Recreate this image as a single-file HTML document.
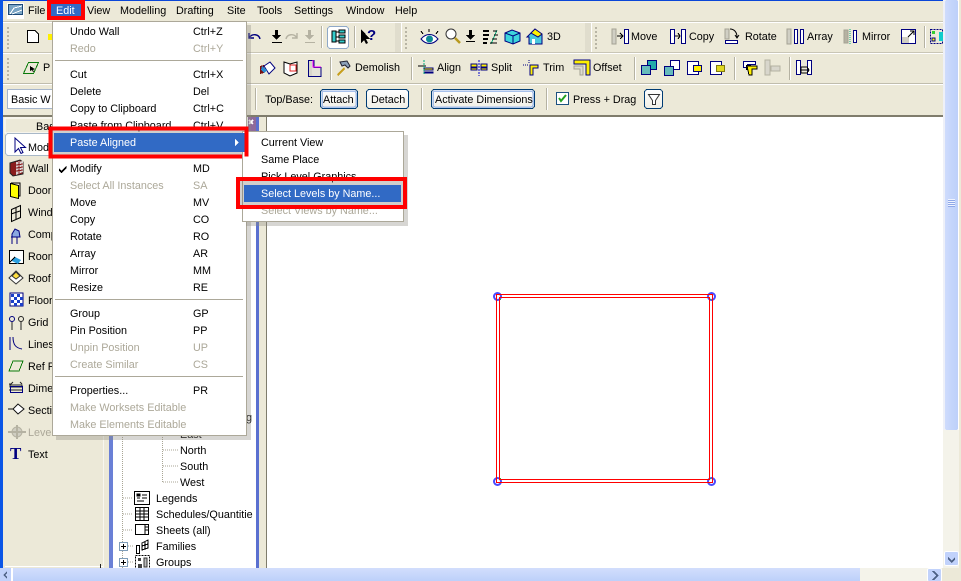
<!DOCTYPE html>
<html><head><meta charset="utf-8"><style>
html,body{margin:0;padding:0;background:#fff;width:961px;height:581px;overflow:hidden}
svg{display:block;position:absolute;left:0;top:0}
text{font-family:"Liberation Sans",sans-serif;font-size:10.8px;fill:#000}
.g{fill:#aca899}
.w{fill:#fff}
.n{fill:none;stroke:#00007f}
</style></head><body>
<svg width="961" height="581" viewBox="0 0 961 581" shape-rendering="crispEdges">
<defs>
<linearGradient id="tb" x1="0" x2="0" y1="0" y2="1"><stop offset="0" stop-color="#fff"/><stop offset="1" stop-color="#f0efe6"/></linearGradient>
<linearGradient id="sv" x1="0" x2="1" y1="0" y2="0"><stop offset="0" stop-color="#cfdcfc"/><stop offset=".5" stop-color="#c4d5fb"/><stop offset="1" stop-color="#bdd0fa"/></linearGradient>
<linearGradient id="sh" x1="0" x2="0" y1="0" y2="1"><stop offset="0" stop-color="#d2defc"/><stop offset="1" stop-color="#bdd0fa"/></linearGradient>
</defs>
<!-- base -->
<rect width="961" height="581" fill="#fff"/>
<rect x="0" y="0" width="943" height="117" fill="#ece9d8"/>
<rect x="0" y="0" width="943" height="1" fill="#0a46d8"/>
<rect x="0" y="0" width="3" height="581" fill="#0a55e6"/>
<rect x="3" y="117" width="106" height="452" fill="#ece9d8"/>
<!-- toolbar rules -->
<rect x="3" y="21" width="940" height="1" fill="#c9c6b6"/><rect x="3" y="22" width="940" height="1" fill="#fff"/>
<rect x="3" y="52" width="940" height="1" fill="#c9c6b6"/><rect x="3" y="53" width="940" height="1" fill="#fff"/>
<rect x="3" y="83" width="940" height="1" fill="#c0bdad"/><rect x="3" y="84" width="940" height="1" fill="#fff"/>
<rect x="3" y="115" width="940" height="2" fill="#7f7c6c"/>
<!-- toolbar band differences -->
<rect x="395" y="23" width="6" height="29" fill="#e0ddcd"/><rect x="585" y="23" width="6" height="29" fill="#e0ddcd"/>
<rect x="401" y="23" width="1" height="29" fill="#fff"/><rect x="591" y="23" width="1" height="29" fill="#fff"/>
<!-- grips -->
<g fill="#b8b5a5">
<rect x="7" y="27" width="2" height="2"/><rect x="7" y="31" width="2" height="2"/><rect x="7" y="35" width="2" height="2"/><rect x="7" y="39" width="2" height="2"/><rect x="7" y="43" width="2" height="2"/><rect x="7" y="47" width="2" height="2"/>
<rect x="7" y="58" width="2" height="2"/><rect x="7" y="62" width="2" height="2"/><rect x="7" y="66" width="2" height="2"/><rect x="7" y="70" width="2" height="2"/><rect x="7" y="74" width="2" height="2"/><rect x="7" y="78" width="2" height="2"/>
<rect x="405" y="27" width="2" height="2"/><rect x="405" y="31" width="2" height="2"/><rect x="405" y="35" width="2" height="2"/><rect x="405" y="39" width="2" height="2"/><rect x="405" y="43" width="2" height="2"/><rect x="405" y="47" width="2" height="2"/>
<rect x="595" y="27" width="2" height="2"/><rect x="595" y="31" width="2" height="2"/><rect x="595" y="35" width="2" height="2"/><rect x="595" y="39" width="2" height="2"/><rect x="595" y="43" width="2" height="2"/><rect x="595" y="47" width="2" height="2"/>
</g>
<!-- vertical separators -->
<g fill="#b5b2a2">
<rect x="321" y="26" width="1" height="22"/><rect x="354" y="26" width="1" height="22"/><rect x="924" y="26" width="1" height="22"/>
<rect x="330" y="57" width="1" height="23"/><rect x="411" y="57" width="1" height="23"/><rect x="634" y="57" width="1" height="23"/><rect x="734" y="57" width="1" height="23"/><rect x="789" y="57" width="1" height="23"/>
<rect x="255" y="88" width="1" height="22"/><rect x="421" y="88" width="1" height="22"/><rect x="546" y="88" width="1" height="22"/>
</g>
<g fill="#fff">
<rect x="322" y="26" width="1" height="22"/><rect x="355" y="26" width="1" height="22"/><rect x="925" y="26" width="1" height="22"/>
<rect x="331" y="57" width="1" height="23"/><rect x="412" y="57" width="1" height="23"/><rect x="635" y="57" width="1" height="23"/><rect x="735" y="57" width="1" height="23"/><rect x="790" y="57" width="1" height="23"/>
<rect x="256" y="88" width="1" height="22"/><rect x="422" y="88" width="1" height="22"/><rect x="547" y="88" width="1" height="22"/>
</g>
<!-- menu bar -->
<text x="28" y="14">File</text><text x="87" y="14">View</text><text x="120" y="14">Modelling</text><text x="176" y="14">Drafting</text><text x="227" y="14">Site</text><text x="257" y="14">Tools</text><text x="294" y="14">Settings</text><text x="346" y="14">Window</text><text x="395" y="14">Help</text>
<!-- app icon -->
<rect x="7" y="3" width="17" height="16" fill="#fff"/><rect x="8.500" y="4.500" width="14" height="10" fill="#7aa4c4" stroke="#1d4a78"/><path d="M10 14L14 8L22 6M12 14L22 10" stroke="#fff" fill="none"/>
<!-- row 1 icons -->
<path d="M27.5 30.5H35L38.5 34V42.5H27.5Z" fill="#fff" stroke="#000"/>
<path d="M48 34h4v6h-4z" fill="#fff000"/>
<path d="M249 33v5h5M249 38c3-5 10-4 11 1" class="n" fill="none" shape-rendering="auto" stroke-width="1.4"/>
<path d="M275 30h3v5h3l-4.500 5-4.500-5h3zM272 42h10v1h-10z" fill="#000"/>
<path d="M297 33v5h-5M297 38c-3-5-10-4-11 1" fill="none" stroke="#b5b2a2" stroke-width="1.4" shape-rendering="auto"/>
<path d="M308 30h3v5h3l-4.500 5-4.500-5h3zM305 42h10v1h-10z" fill="#b5b2a2"/>
<!-- active button -->
<rect x="327.500" y="26.500" width="21" height="22" rx="3" fill="#fff" stroke="#8fa9c8"/>
<path d="M332 31h4v11h-4zM339 30h6v3h-6zM339 35h6v3h-6zM339 40h6v3h-6zM336 32h3M336 37h3M336 41h3" fill="#3cc" stroke="#000"/>
<!-- help -->
<path d="M361 29v14l3-3 2 4 2-1-2-4h4z" fill="#000"/>
<text x="367" y="40" style="font-size:15px;font-weight:bold;fill:#00007f">?</text>
<!-- eye etc -->
<path d="M421 39c5-6 12-6 17 0c-5 6-12 6-17 0z" fill="#fff" stroke="#00007f" shape-rendering="auto"/><circle cx="429.500" cy="39" r="3.500" fill="#0b8a96" shape-rendering="auto"/>
<path d="M429 32v-3M423 34l-2-3M436 34l2-3" stroke="#000"/>
<circle cx="451" cy="34" r="5" fill="#fff" stroke="#333" shape-rendering="auto"/><path d="M455 38l5 5" stroke="#b89a20" stroke-width="2.500" shape-rendering="auto"/>
<path d="M469 30h3v5h3l-4.500 5-4.500-5h3zM466 41h9v1h-9z" fill="#000"/>
<path d="M483 30h6v2h-6zM483 34h6v2h-6zM483 38h5v2h-5zM483 42h4v2h-4z" fill="#000"/><path d="M497 30l-6 14" stroke="#0a7" /><path d="M493 31h4M494 35h4M492 39h5M490 43h7" stroke="#000"/>
<path d="M505 33l7-3 8 3v8l-7 3-8-3z" fill="#3dd6dc" stroke="#00007f" shape-rendering="auto"/><path d="M505 33l8 3 7-3M513 36v8" stroke="#00007f" fill="none" shape-rendering="auto"/>
<path d="M527 37l8-8 7 6v9h-13v-7z" fill="#4ac8dc" stroke="#00007f" shape-rendering="auto"/><path d="M531 33l4-4 7 5-4 3z" fill="#fff000" stroke="#00007f" shape-rendering="auto"/><rect x="532" y="39" width="3" height="5" fill="#fff"/>
<text x="547" y="40">3D</text>
<!-- move -->
<rect x="612" y="29" width="4" height="15" fill="#d0cfc4" stroke="#a5a294"/><rect x="624.500" y="29.500" width="4" height="14" fill="#fff" stroke="#00007f"/><path d="M617 36h6M620 33l3 3-3 3" fill="none" stroke="#000"/>
<text x="631" y="40">Move</text>
<rect x="670.500" y="29.500" width="4" height="14" fill="#fff" stroke="#00007f"/><rect x="681.500" y="29.500" width="4" height="14" fill="#fff" stroke="#00007f"/><path d="M675 36h5M678 33l2 3-2 3" fill="none" stroke="#000"/>
<text x="689" y="40">Copy</text>
<path d="M725 29h4v10h-4z" fill="#d0cfc4" stroke="#a5a294"/><rect x="725.500" y="40.500" width="12" height="3" fill="#fff" stroke="#00007f"/><path d="M730 29c4 0 7 3 7 8M735 35l2 3 2-3" fill="none" stroke="#000" shape-rendering="auto"/>
<text x="745" y="40">Rotate</text>
<rect x="787" y="29" width="4" height="15" fill="#d0cfc4" stroke="#a5a294"/><rect x="794.500" y="29.500" width="3" height="14" fill="#fff" stroke="#00007f"/><rect x="800.500" y="29.500" width="3" height="14" fill="#fff" stroke="#00007f"/>
<text x="807" y="40">Array</text>
<rect x="844" y="30" width="4" height="13" fill="#b5b2a2" stroke="#a5a294"/><path d="M850 29v15" stroke="#0a7" stroke-dasharray="1 1"/><rect x="853.500" y="30.500" width="3" height="12" fill="#fff" stroke="#00007f"/>
<text x="862" y="40">Mirror</text>
<rect x="901.500" y="29.500" width="14" height="14" fill="#fff" stroke="#00007f"/><rect x="902" y="37" width="7" height="6" fill="#cfcdc2"/><path d="M908 37l6-6M910 31h4v4" fill="none" stroke="#000" shape-rendering="auto"/>
<rect x="930.500" y="29.500" width="12" height="14" fill="none" stroke="#00007f" stroke-dasharray="2 1"/><rect x="932" y="31" width="3" height="3" fill="#3c3"/><rect x="932" y="38" width="3" height="3" fill="#ff0" stroke="#00007f"/><rect x="939" y="32" width="4" height="9" fill="#1cc"/>
<!-- row 2 icons -->
<path d="M23.500 73.500L28.500 62.500H38.500L33.500 73.500Z" fill="none" stroke="#0a7a0a"/><path d="M30 66l5 3-2 1 1 2-1 0-1-2-2 1z" fill="#000"/>
<text x="43" y="71">P</text>
<path d="M260 66l4 -1v8l-4 1z" fill="#7a1010"/><path d="M264 66l6-4 5 6-6 6z" fill="#fff" stroke="#00007f" shape-rendering="auto"/><path d="M262 66l5 4-3 3-3-3z" fill="#2a8bd0"/>
<path d="M284 62l6 2 7-2v11l-7 3-6-3z" fill="#fff" stroke="#000" shape-rendering="auto"/><rect x="290" y="65" width="6" height="6" fill="none" stroke="#e02020"/>
<path d="M308.500 60.500h4v16h-4z" fill="#d8d6cc" stroke="#00007f"/><path d="M312 60.500h2v7h7v9h-9" fill="#e4e2d8" stroke="#00007f"/><path d="M313 60v7h8" fill="none" stroke="#f0f"/>
<path d="M337 74l7-7 1 2-7 7z" fill="#c8a020"/><path d="M340 62l7-1 3 5-2 2-3-3-3 1z" fill="#8ca0b8" stroke="#223" shape-rendering="auto"/>
<text x="355" y="71">Demolish</text>
<path d="M418 66h8" stroke="#000"/><path d="M424 68h9v2h-9zM424 72h9v1h-9z" fill="#fff000" stroke="#00007f"/><path d="M424 60v15" stroke="#0a7" stroke-dasharray="2 1"/>
<text x="437" y="71">Align</text>
<path d="M471 64h6v3h-6zM471 70h6v-2h-6zM481 64h6v3h-6zM481 70h6v-2h-6z" fill="#fff000" stroke="#00007f"/><path d="M479 60v16" stroke="#00c" stroke-dasharray="2 1"/>
<text x="491" y="71">Split</text>
<path d="M523 65h6M529 60v4" stroke="#00007f" stroke-dasharray="1 1"/><path d="M530 65h8v3h-5v7h-3z" fill="#fff000" stroke="#00007f"/>
<text x="543" y="71">Trim</text>
<path d="M574 60h16v15h-4v-11h-12z" fill="#fff000" stroke="#00007f"/><path d="M574 66h9v9h-3v-6h-6z" fill="#dedcd0" stroke="#a5a294"/>
<text x="593" y="71">Offset</text>
<rect x="647.500" y="60.500" width="9" height="9" fill="#2aa" stroke="#00007f"/><rect x="641.500" y="65.500" width="9" height="9" fill="#6bb" stroke="#00007f"/>
<rect x="670.500" y="60.500" width="9" height="9" fill="#fff" stroke="#00007f"/><rect x="664.500" y="66.500" width="9" height="9" fill="#6bb" stroke="#00007f"/>
<rect x="687.500" y="61.500" width="11" height="13" fill="#fff" stroke="#00007f"/><rect x="693.500" y="65.500" width="8" height="6" fill="#fff000" stroke="#00007f"/>
<rect x="710.500" y="61.500" width="11" height="13" fill="#fff" stroke="#00007f"/><rect x="716.500" y="65.500" width="8" height="6" fill="#e0d820" stroke="#807a10"/>
<path d="M743.500 61.500h12v3h-8v3h-4z" fill="#fff" stroke="#00007f"/><rect x="746.500" y="65.500" width="4" height="4" fill="#fff" stroke="#000"/><path d="M747 66h10v3h-5v6h-3z" fill="#fff000" stroke="#000"/>
<path d="M765 60h5v15h-5zM771 66h9v5h-9z" fill="#d8d6cc" stroke="#b5b2a2"/>
<rect x="796.500" y="60.500" width="4" height="14" fill="#fff" stroke="#00007f"/><rect x="807.500" y="60.500" width="4" height="14" fill="#fff" stroke="#00007f"/><path d="M800 70h8M801 67h6l2 3-2 3h-6z" fill="none" stroke="#000"/>
<!-- row 3 -->
<rect x="7.500" y="89.500" width="50" height="19" fill="#fff" stroke="#a5b5cc"/>
<text x="11" y="103">Basic W</text>
<text x="265" y="103">Top/Base:</text>
<g>
<rect x="320.500" y="89.500" width="37" height="19" rx="3" fill="url(#tb)" stroke="#003c74"/><rect x="322" y="91" width="34" height="16" rx="2" fill="none" stroke="#a7c0ea" stroke-width="1.500"/>
<rect x="366.500" y="89.500" width="42" height="19" rx="3" fill="url(#tb)" stroke="#003c74"/>
<rect x="431.500" y="89.500" width="103" height="19" rx="3" fill="url(#tb)" stroke="#003c74"/><rect x="433" y="91" width="100" height="16" rx="2" fill="none" stroke="#a7c0ea" stroke-width="1.500"/>
<rect x="644.500" y="89.500" width="18" height="19" rx="3" fill="url(#tb)" stroke="#003c74"/>
</g>
<text x="323" y="103">Attach</text><text x="371" y="103">Detach</text><text x="435" y="103">Activate Dimensions</text>
<path d="M648.500 94.500h11l-4 6v4h-3v-4z" fill="#fff" stroke="#333" shape-rendering="auto"/>
<rect x="556.500" y="92.500" width="12" height="12" fill="#fff" stroke="#1c5180"/><path d="M559 98l2 3 5-6" fill="none" stroke="#21a121" stroke-width="2" shape-rendering="auto"/>
<text x="573" y="103">Press + Drag</text>
<!-- left panel -->
<rect x="5" y="118" width="60" height="15" fill="#ece9d8" stroke="#fff"/>
<text x="36" y="130">Bas</text>
<rect x="5.500" y="133.500" width="60" height="22" rx="3" fill="#fff" stroke="#a8b8c8"/>
<path d="M15 138v14l3.500-3.500 2.500 5 2-1-2.500-5h5z" fill="#fff" stroke="#00007f" shape-rendering="auto"/>
<text x="28" y="151">Modify</text><text x="28" y="172">Wall</text><text x="28" y="194">Door</text><text x="28" y="216">Window</text><text x="28" y="238">Component</text><text x="28" y="260">Room</text><text x="28" y="282">Roof</text><text x="28" y="304">Floor</text><text x="28" y="326">Grid</text><text x="28" y="348">Lines</text><text x="28" y="370">Ref Plane</text><text x="28" y="392">Dimension</text><text x="28" y="414">Section</text><text x="28" y="436" style="fill:#aca899">Level</text><text x="28" y="458">Text</text>
<!-- palette icons -->
<path d="M10 163l10-3 3 2v12l-10 2-3-3z" fill="#8a1c1c" stroke="#222" shape-rendering="auto"/><path d="M16 162l7-1v11l-7 3z" fill="#d8d0d0"/><path d="M16 165l7-1M16 168l7-1M16 171l7-1M19 162v12" stroke="#8a1c1c" fill="none"/>
<path d="M10.500 183.500l8 2v13l-8-2z" fill="#ff0" stroke="#000"/><path d="M11 183h9v13h-2" fill="none" stroke="#000"/>
<path d="M11.500 209.500l9-4v12l-9 4zM16 208v11M11 214l9-3" fill="none" stroke="#000" shape-rendering="auto"/>
<path d="M12 234l3-5 4 2 1 6h-8zM11 237h7M12 237v7M17 237v7" fill="#8aa8e0" stroke="#00007f" shape-rendering="auto"/>
<rect x="9.500" y="250.500" width="14" height="13" fill="#fff" stroke="#000"/><path d="M15 257l6 3-3 4-6-3z" fill="#2a9fe0"/><path d="M9 263l6-6" stroke="#000"/>
<path d="M9 278l7-7 7 7-7 6z" fill="#fff" stroke="#333" shape-rendering="auto"/><path d="M12 276l4-4 4 4-4 3z" fill="#ffe040" stroke="#333" shape-rendering="auto"/>
<rect x="10" y="293" width="13" height="13" fill="#fff" stroke="#00007f"/><path d="M11 294h3v3h-3zM17 294h3v3h-3zM14 297h3v3h-3zM20 297h3v3h-3zM11 300h3v3h-3zM17 300h3v3h-3zM14 303h3v3h-3zM20 303h3v3h-3z" fill="#1c3fc8"/>
<circle cx="12" cy="319" r="2.500" class="n" stroke="#222" fill="none" shape-rendering="auto"/><circle cx="21" cy="319" r="2.500" fill="none" stroke="#222" shape-rendering="auto"/><path d="M12 322v8M21 322v8" stroke="#222"/>
<path d="M10 337v13M13 337c0 8 3 11 9 12" fill="none" stroke="#00007f" shape-rendering="auto"/>
<path d="M9 371l4-10h10l-4 10z" fill="none" stroke="#0a7a0a"/>
<path d="M9 384h2l2-2M22 384l-2-2M10 385h12v2H10zM9 390h14" fill="none" stroke="#222" shape-rendering="auto"/><rect x="10.500" y="386.500" width="12" height="6" fill="none" stroke="#00007f"/>
<path d="M8 409h5" stroke="#111"/><path d="M13 409l5-5 6 5-6 5z" fill="#fff" stroke="#111" shape-rendering="auto"/>
<circle cx="17" cy="432" r="5" fill="#d0cec2" stroke="#b5b2a2" shape-rendering="auto"/><path d="M8 432h18M17 425v14" stroke="#b5b2a2" stroke-width="2"/>
<text x="10" y="459" style="font:bold 17px 'Liberation Serif',serif;fill:#00007f">T</text>
<rect x="5" y="566" width="98" height="1" fill="#fff"/><rect x="103" y="117" width="1" height="452" fill="#f8f7f0"/><rect x="100" y="564" width="1" height="4" fill="#222"/>
<!-- tree panel -->
<rect x="109" y="117" width="4" height="452" fill="#6a80d6"/>
<rect x="113" y="117" width="143" height="452" fill="#fff"/>
<rect x="256" y="117" width="3" height="452" fill="#5a70d0"/>
<rect x="259" y="117" width="7" height="452" fill="#ece9d8"/>
<rect x="266" y="117" width="1" height="452" fill="#7f7c6c"/>
<rect x="248" y="117" width="8" height="14" fill="#8e6a9a"/><path d="M249 120l4 4m0-4l-4 4" stroke="#fff" stroke-width="1.500"/>
<g fill="none" stroke="#a8a594" stroke-dasharray="1 1">
<path d="M122.500 437v132M162.500 437v45M163 450h16M163 466h16M163 482h16M123 498h10M123 514h10M123 530h10M128 546h6M128 562h6"/>
</g>
<text x="246" y="421">g</text>
<text x="180" y="438">East</text><text x="180" y="454">North</text><text x="180" y="470">South</text><text x="180" y="486">West</text>
<text x="156" y="502">Legends</text><text x="156" y="518">Schedules/Quantitie</text><text x="156" y="534">Sheets (all)</text><text x="156" y="550">Families</text><text x="156" y="566">Groups</text>
<rect x="134.500" y="491.500" width="15" height="13" fill="#fff" stroke="#000"/><path d="M137 494h3v2h-3zM142 495h5M137 498h3M142 498h5M137 501h7" stroke="#000" fill="#000"/>
<rect x="135.500" y="507.500" width="13" height="13" fill="#fff" stroke="#000"/><path d="M136 511h12M136 514h12M136 517h12M140 508v12M144 508v12" stroke="#000"/>
<rect x="135.500" y="524.500" width="13" height="10" fill="#fff" stroke="#000"/><path d="M145 525v9M145 527h3M145 530h3" stroke="#000"/>
<rect x="119.500" y="542.500" width="8" height="8" fill="#fff" stroke="#7f9db9"/><path d="M121 546.500h5M123.500 544v5" stroke="#000"/>
<rect x="119.500" y="558.500" width="8" height="8" fill="#fff" stroke="#7f9db9"/><path d="M121 562.500h5M123.500 560v5" stroke="#000"/>
<path d="M136.500 545.500h3v8h-3z" fill="#fff" stroke="#000"/><path d="M142 543l6-3v8l-6 2zM145 541v8M142 546l6-2" fill="#fff" stroke="#000"/>
<rect x="135.500" y="555.500" width="14" height="13" fill="none" stroke="#000" stroke-dasharray="2 1"/><rect x="138" y="558" width="3" height="3" fill="#444"/><rect x="138" y="564" width="4" height="4" fill="#444"/><rect x="144" y="558" width="3" height="9" fill="#bbb" stroke="#333"/>
<!-- canvas -->
<g fill="none" stroke="#4a4aff" stroke-width="2" shape-rendering="auto">
<circle cx="497.500" cy="296.500" r="3.500"/><circle cx="711.500" cy="296.500" r="3.500"/><circle cx="497.500" cy="481.500" r="3.500"/><circle cx="711.500" cy="481.500" r="3.500"/>
</g>
<g fill="#3aa83a"><rect x="499" y="299" width="2" height="1"/><rect x="709" y="299" width="2" height="1"/><rect x="499" y="478" width="2" height="1"/><rect x="709" y="478" width="2" height="1"/></g>
<g fill="none" stroke="#f00">
<rect x="496.500" y="294.500" width="216" height="188"/>
<rect x="499.500" y="297.500" width="210" height="182"/>
</g>
<!-- right scrollbar -->
<rect x="943" y="0" width="18" height="581" fill="#f4f3ea"/>
<rect x="943" y="0" width="2" height="430" fill="#eef0f8"/>
<rect x="945" y="0" width="13" height="430" rx="2" fill="url(#sv)"/>
<rect x="958" y="0" width="1" height="430" fill="#fff"/>
<rect x="959" y="0" width="2" height="581" fill="#ece9d8"/>
<g fill="#f0f4ff"><rect x="948" y="199" width="7" height="1"/><rect x="948" y="201" width="7" height="1"/><rect x="948" y="203" width="7" height="1"/><rect x="948" y="205" width="7" height="1"/></g>
<g fill="#8fa8e8"><rect x="948" y="200" width="7" height="1"/><rect x="948" y="202" width="7" height="1"/><rect x="948" y="204" width="7" height="1"/><rect x="948" y="206" width="7" height="1"/></g>
<rect x="944.500" y="551.500" width="14" height="14" rx="2" fill="#c1d2fb" stroke="#fff"/>
<path d="M948 557l3.500 3.500L955 557v2.500L951.500 563 948 559.500z" fill="#4d6185"/>
<!-- bottom scrollbar -->
<rect x="3" y="568" width="958" height="13" fill="#f4f3ea"/>
<rect x="0" y="568" width="11" height="13" fill="#c1d2fb"/><rect x="11" y="568" width="2" height="13" fill="#fff"/>
<path d="M7 571l-4 4 4 4v-2l-2-2 2-2z" fill="#4d6185"/>
<rect x="13" y="568" width="847" height="13" fill="url(#sh)"/>
<rect x="942" y="568" width="19" height="13" fill="#ece9d8"/>
<rect x="927.500" y="568.500" width="14" height="13" rx="2" fill="#c1d2fb" stroke="#fff"/>
<path d="M932 571l4 4.500-4 4.500h2.500l4-4.500-4-4.500z" fill="#4d6185"/>
<!-- edit menu -->
<rect x="56" y="25" width="195" height="415" fill="#8c8a80" opacity=".35"/>
<rect x="52.500" y="21.500" width="194" height="414" fill="#fff" stroke="#aca899"/>
<g>
<text x="70" y="35">Undo Wall</text><text x="193" y="35">Ctrl+Z</text>
<text x="70" y="52" class="g">Redo</text><text x="193" y="52" class="g">Ctrl+Y</text>
<text x="70" y="78">Cut</text><text x="193" y="78">Ctrl+X</text>
<text x="70" y="95">Delete</text><text x="193" y="95">Del</text>
<text x="70" y="112">Copy to Clipboard</text><text x="193" y="112">Ctrl+C</text>
<text x="70" y="129">Paste from Clipboard</text><text x="193" y="129">Ctrl+V</text>
<text x="70" y="172">Modify</text><text x="193" y="172">MD</text>
<text x="70" y="189" class="g">Select All Instances</text><text x="193" y="189" class="g">SA</text>
<text x="70" y="206">Move</text><text x="193" y="206">MV</text>
<text x="70" y="223">Copy</text><text x="193" y="223">CO</text>
<text x="70" y="240">Rotate</text><text x="193" y="240">RO</text>
<text x="70" y="257">Array</text><text x="193" y="257">AR</text>
<text x="70" y="274">Mirror</text><text x="193" y="274">MM</text>
<text x="70" y="291">Resize</text><text x="193" y="291">RE</text>
<text x="70" y="317">Group</text><text x="193" y="317">GP</text>
<text x="70" y="334">Pin Position</text><text x="193" y="334">PP</text>
<text x="70" y="351" class="g">Unpin Position</text><text x="193" y="351" class="g">UP</text>
<text x="70" y="368" class="g">Create Similar</text><text x="193" y="368" class="g">CS</text>
<text x="70" y="394">Properties...</text><text x="193" y="394">PR</text>
<text x="70" y="411" class="g">Make Worksets Editable</text>
<text x="70" y="428" class="g">Make Elements Editable</text>
</g>
<rect x="55" y="60" width="188" height="1" fill="#aca899"/><rect x="55" y="299" width="188" height="1" fill="#aca899"/><rect x="55" y="376" width="188" height="1" fill="#aca899"/>
<path d="M59 168l2.500 3 5-5.500v2.500l-5 5.500-2.500-3z" fill="#000"/>
<!-- paste aligned -->
<rect x="53" y="130" width="196" height="28" fill="#77756c" opacity=".35"/>
<rect x="54" y="133" width="188" height="19" fill="#316ac5"/>
<text x="70" y="146" class="w">Paste Aligned</text>
<path d="M235 139l4 3.500-4 3.500z" fill="#fff"/>
<path d="M50.500 128.500h196v28h-196z" fill="none" stroke="#f00" stroke-width="4" shape-rendering="crispEdges"/>
<!-- submenu -->
<rect x="246" y="135" width="162" height="91" fill="#8c8a80" opacity=".35"/>
<rect x="242.500" y="131.500" width="161" height="90" fill="#fff" stroke="#aca899"/>
<rect x="242" y="133" width="3" height="19" fill="#316ac5"/>
<text x="261" y="146">Current View</text><text x="261" y="163">Same Place</text><text x="261" y="180">Pick Level Graphics</text><text x="261" y="214" class="g">Select Views by Name...</text>
<path d="M246.500 128.500v28" stroke="#f00" stroke-width="4"/>
<rect x="240" y="181" width="166" height="25" fill="#77756c" opacity=".35"/>
<rect x="244" y="185" width="157" height="17" fill="#316ac5"/>
<text x="261" y="197" class="w">Select Levels by Name...</text>
<path d="M238 179h167v28h-167z" fill="none" stroke="#f00" stroke-width="4"/>
<!-- Edit red box -->
<rect x="49" y="1" width="34" height="18" fill="#316ac5"/>
<text x="56" y="14" class="w">Edit</text>
<path d="M49 2h34v16h-34z" fill="none" stroke="#f00" stroke-width="4"/>
</svg>
</body></html>
